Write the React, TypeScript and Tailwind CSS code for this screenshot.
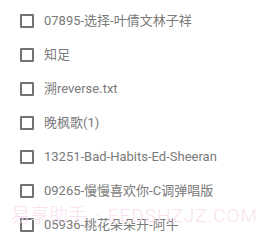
import React from 'react';

const ITEMS = [
  '07895-选择-叶倩文林子祥',
  '知足',
  '溯reverse.txt',
  '晚枫歌(1)',
  '13251-Bad-Habits-Ed-Sheeran',
  '09265-慢慢喜欢你-C调弹唱版',
  '05936-桃花朵朵开-阿牛',
];

const App: React.FC = () => {
  return (
    <div
      className="relative w-[258px] h-[240px] bg-white overflow-hidden"
      style={{ fontFamily: 'Roboto, "Noto Sans CJK SC", sans-serif' }}
    >
      <ul className="flex flex-col pt-[4px]">
        {ITEMS.map((name) => (
          <li key={name} className="flex items-center h-[34px] pl-[20px]">
            <span className="w-[14px] h-[14px] border-2 border-[#737373] rounded-[1px] shrink-0" />
            <span className="ml-[10px] text-[13px] text-[#7a7a7a] whitespace-nowrap">{name}</span>
          </li>
        ))}
      </ul>

      {/* watermark */}
      <div className="absolute left-[11px] top-[205px] flex items-center text-[19px] leading-[22px] text-[#fadff0] whitespace-nowrap pointer-events-none font-light">
        <span>易享助手</span>
        <span className="mx-[8px]">·</span>
        <span className="tracking-[1px]">EEDSHZJZ.COM</span>
      </div>
    </div>
  );
};

export default App;
